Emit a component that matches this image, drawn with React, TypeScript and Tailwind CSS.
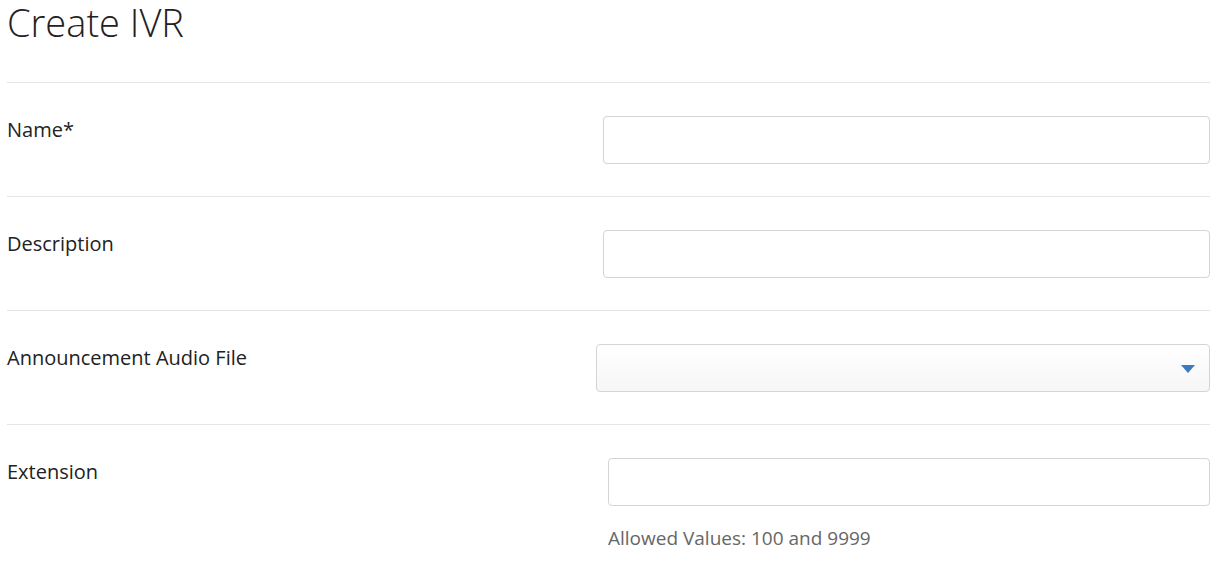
import React from 'react';

const font = { fontFamily: '"Open Sans", Lato, sans-serif' };

function Row({ label, children, last = false }: { label: string; children: React.ReactNode; last?: boolean }) {
  return (
    <div className={`flex pt-[33px] ${last ? 'pb-[12px]' : 'pb-[32px] border-b border-[#e5e5e5]'}`}>
      <div className="w-[589px] shrink-0 text-[20px] leading-[27px] text-[#222]">{label}</div>
      <div className="flex-1">{children}</div>
    </div>
  );
}

export default function App() {
  return (
    <div className="bg-white min-h-screen pl-[7px] pr-[16px] text-[#222]" style={font}>
      <h1 className="text-[38px] font-light leading-[44px] text-[#222] pb-[38px]">Create IVR</h1>
      <div className="border-t border-[#e5e5e5]">
        <Row label="Name*">
          <input className="ml-[7px] w-[calc(100%-7px)] h-[48px] border border-[#d4d4d4] rounded-[4px] px-3 outline-none block" />
        </Row>
        <Row label="Description">
          <input className="ml-[7px] w-[calc(100%-7px)] h-[48px] border border-[#d4d4d4] rounded-[4px] px-3 outline-none block" />
        </Row>
        <Row label="Announcement Audio File">
          <div className="relative h-[48px] border border-[#d4d4d4] rounded-[4px] bg-gradient-to-b from-white to-[#f6f6f6]">
            <svg className="absolute right-[14px] top-[20px]" width="14" height="8" viewBox="0 0 14 8">
              <path d="M0 0 H14 L7 8 Z" fill="#3b7bbf" />
            </svg>
          </div>
        </Row>
        <Row label="Extension" last>
          <input className="ml-[12px] w-[calc(100%-12px)] h-[48px] border border-[#d4d4d4] rounded-[4px] px-3 outline-none block" />
          <p className="ml-[12px] mt-[19px] text-[19px] leading-[27px] text-[#666]">Allowed Values: 100 and 9999</p>
        </Row>
      </div>
    </div>
  );
}
